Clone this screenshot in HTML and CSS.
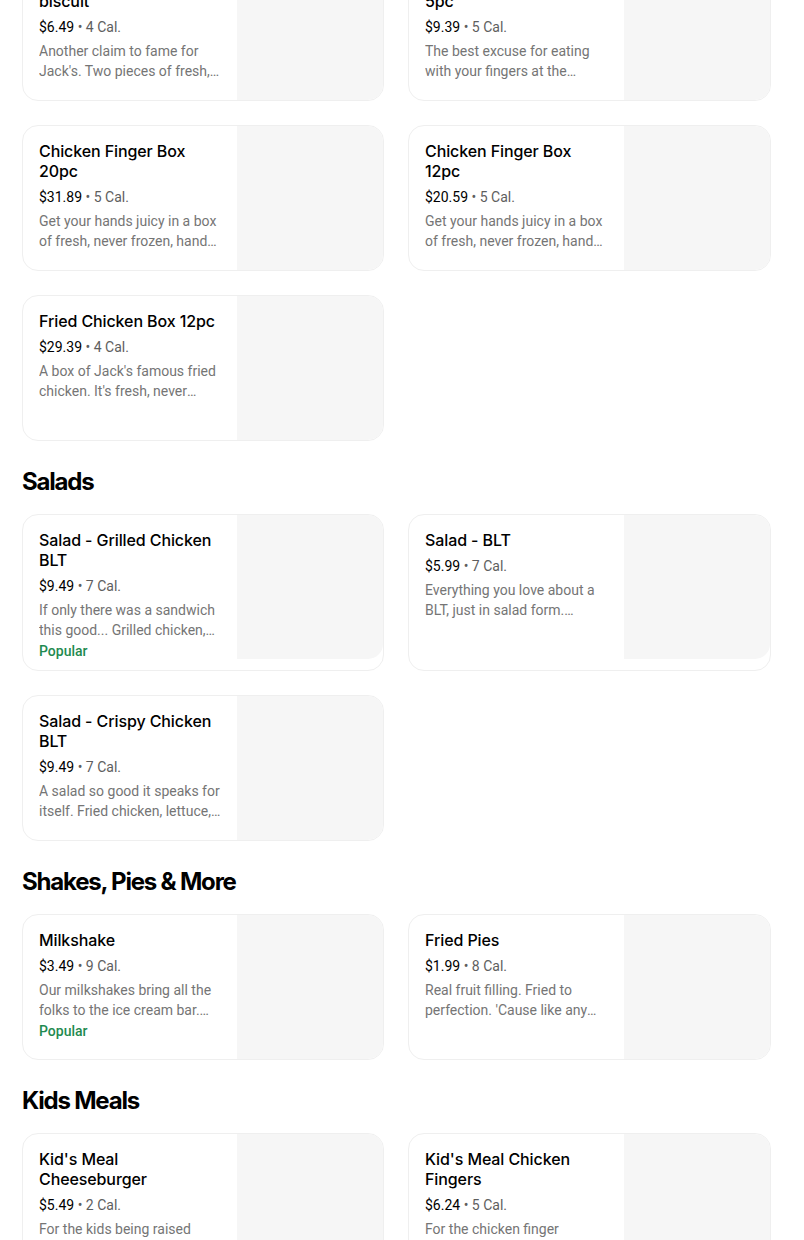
FILE: index.html
```html
<!DOCTYPE html>
<html lang="en">
<head>
<meta charset="utf-8">
<title>Menu</title>
<link rel="stylesheet" href="styles.css">
</head>
<body>
<main class="menu">
  <section class="section section-first">
    <div class="grid">
      <div class="card">
        <div class="info">
          <div class="title">Fried Chicken 2pc &amp; biscuit</div>
          <div class="meta"><span class="price">$6.49</span> • 4 Cal.</div>
          <div class="desc">Another claim to fame for Jack's. Two pieces of fresh, never frozen, hand breaded fried chicken served with a warm, flaky biscuit.</div>
        </div>
        <div class="img"></div>
      </div>
      <div class="card">
        <div class="info">
          <div class="title">Chicken Finger Combo 5pc</div>
          <div class="meta"><span class="price">$9.39</span> • 5 Cal.</div>
          <div class="desc">The best excuse for eating with your fingers at the restaurant. Fresh, never frozen, hand breaded chicken fingers.</div>
        </div>
        <div class="img"></div>
      </div>
      <div class="card">
        <div class="info">
          <div class="title">Chicken Finger Box 20pc</div>
          <div class="meta"><span class="price">$31.89</span> • 5 Cal.</div>
          <div class="desc">Get your hands juicy in a box of fresh, never frozen, hand breaded chicken fingers for the whole crew.</div>
        </div>
        <div class="img"></div>
      </div>
      <div class="card">
        <div class="info">
          <div class="title">Chicken Finger Box 12pc</div>
          <div class="meta"><span class="price">$20.59</span> • 5 Cal.</div>
          <div class="desc">Get your hands juicy in a box of fresh, never frozen, hand breaded chicken fingers for the whole crew.</div>
        </div>
        <div class="img"></div>
      </div>
      <div class="card">
        <div class="info">
          <div class="title">Fried Chicken Box 12pc</div>
          <div class="meta"><span class="price">$29.39</span> • 4 Cal.</div>
          <div class="desc">A box of Jack's famous fried chicken. It's fresh, never frozen, and hand breaded right in our kitchen.</div>
        </div>
        <div class="img"></div>
      </div>
    </div>
  </section>

  <section class="section">
    <h2 class="heading">Salads</h2>
    <div class="grid">
      <div class="card">
        <div class="info">
          <div class="title">Salad - Grilled Chicken BLT</div>
          <div class="meta"><span class="price">$9.49</span> • 7 Cal.</div>
          <div class="desc">If only there was a sandwich this good... Grilled chicken, crispy bacon, tomatoes and cheese on fresh greens.</div>
          <div class="badge">Popular</div>
        </div>
        <div class="img"></div>
      </div>
      <div class="card">
        <div class="info">
          <div class="title">Salad - BLT</div>
          <div class="meta"><span class="price">$5.99</span> • 7 Cal.</div>
          <div class="desc">Everything you love about a BLT, just in salad form. Mouthwatering bacon, tomatoes and cheese on fresh greens.</div>
        </div>
        <div class="img"></div>
      </div>
      <div class="card">
        <div class="info">
          <div class="title">Salad - Crispy Chicken BLT</div>
          <div class="meta"><span class="price">$9.49</span> • 7 Cal.</div>
          <div class="desc">A salad so good it speaks for itself. Fried chicken, lettuce, bacon, tomatoes and cheese.</div>
        </div>
        <div class="img"></div>
      </div>
    </div>
  </section>

  <section class="section">
    <h2 class="heading">Shakes, Pies &amp; More</h2>
    <div class="grid">
      <div class="card">
        <div class="info">
          <div class="title">Milkshake</div>
          <div class="meta"><span class="price">$3.49</span> • 9 Cal.</div>
          <div class="desc">Our milkshakes bring all the folks to the ice cream bar. Thick, creamy and hand-spun.</div>
          <div class="badge">Popular</div>
        </div>
        <div class="img"></div>
      </div>
      <div class="card">
        <div class="info">
          <div class="title">Fried Pies</div>
          <div class="meta"><span class="price">$1.99</span> • 8 Cal.</div>
          <div class="desc">Real fruit filling. Fried to perfection. 'Cause like any good southern dessert, it's fried.</div>
        </div>
        <div class="img"></div>
      </div>
    </div>
  </section>

  <section class="section">
    <h2 class="heading">Kids Meals</h2>
    <div class="grid">
      <div class="card">
        <div class="info">
          <div class="title">Kid's Meal Cheeseburger</div>
          <div class="meta"><span class="price">$5.49</span> • 2 Cal.</div>
          <div class="desc">For the kids being raised right. A cheeseburger, side and drink.</div>
        </div>
        <div class="img"></div>
      </div>
      <div class="card">
        <div class="info">
          <div class="title">Kid's Meal Chicken Fingers</div>
          <div class="meta"><span class="price">$6.24</span> • 5 Cal.</div>
          <div class="desc">For the chicken finger enthusiasts in the family. Served with a side and drink.</div>
        </div>
        <div class="img"></div>
      </div>
    </div>
  </section>
</main>
</body>
</html>
```

FILE: styles.css
```css
* { box-sizing: border-box; }

html, body {
  margin: 0;
  padding: 0;
  background: #ffffff;
}

body {
  font-family: Roboto, "Liberation Sans", sans-serif;
  color: #000000;
  overflow: hidden;
}

.menu {
  width: 749px;
  margin-left: 22px;
}

.section-first {
  margin-top: -45px;
}

.heading {
  margin: 25px 0 16px;
  font-family: Inter, Roboto, sans-serif;
  font-size: 24px;
  line-height: 32px;
  font-weight: 700;
  letter-spacing: -1.2px;
}

.grid {
  display: grid;
  grid-template-columns: 362px 363px;
  column-gap: 24px;
  row-gap: 24px;
}

.card {
  display: flex;
  border: 1px solid #efefef;
  border-radius: 16px;
  overflow: hidden;
  background: #ffffff;
  min-height: 146px;
}

.info {
  flex: 1;
  min-width: 0;
  padding: 15px 16px 9px 16px;
}

.img {
  flex: 0 0 146px;
  height: 144px;
  background: #f6f6f6;
  border-radius: 0 15px 15px 0;
}

.title {
  font-family: Inter, Roboto, sans-serif;
  font-size: 16px;
  line-height: 20px;
  font-weight: 500;
  letter-spacing: -0.1px;
  color: #000000;
  margin-bottom: 6px;
}

.meta {
  font-size: 14px;
  line-height: 20px;
  color: #5e5e5e;
  margin-bottom: 4px;
}

.price {
  color: #000000;
}

.desc {
  font-size: 14px;
  line-height: 20px;
  color: #757575;
  display: -webkit-box;
  -webkit-line-clamp: 2;
  -webkit-box-orient: vertical;
  overflow: hidden;
}

.badge {
  margin-top: 1px;
  font-size: 14px;
  line-height: 20px;
  font-weight: 500;
  color: #1f8a50;
}
```
